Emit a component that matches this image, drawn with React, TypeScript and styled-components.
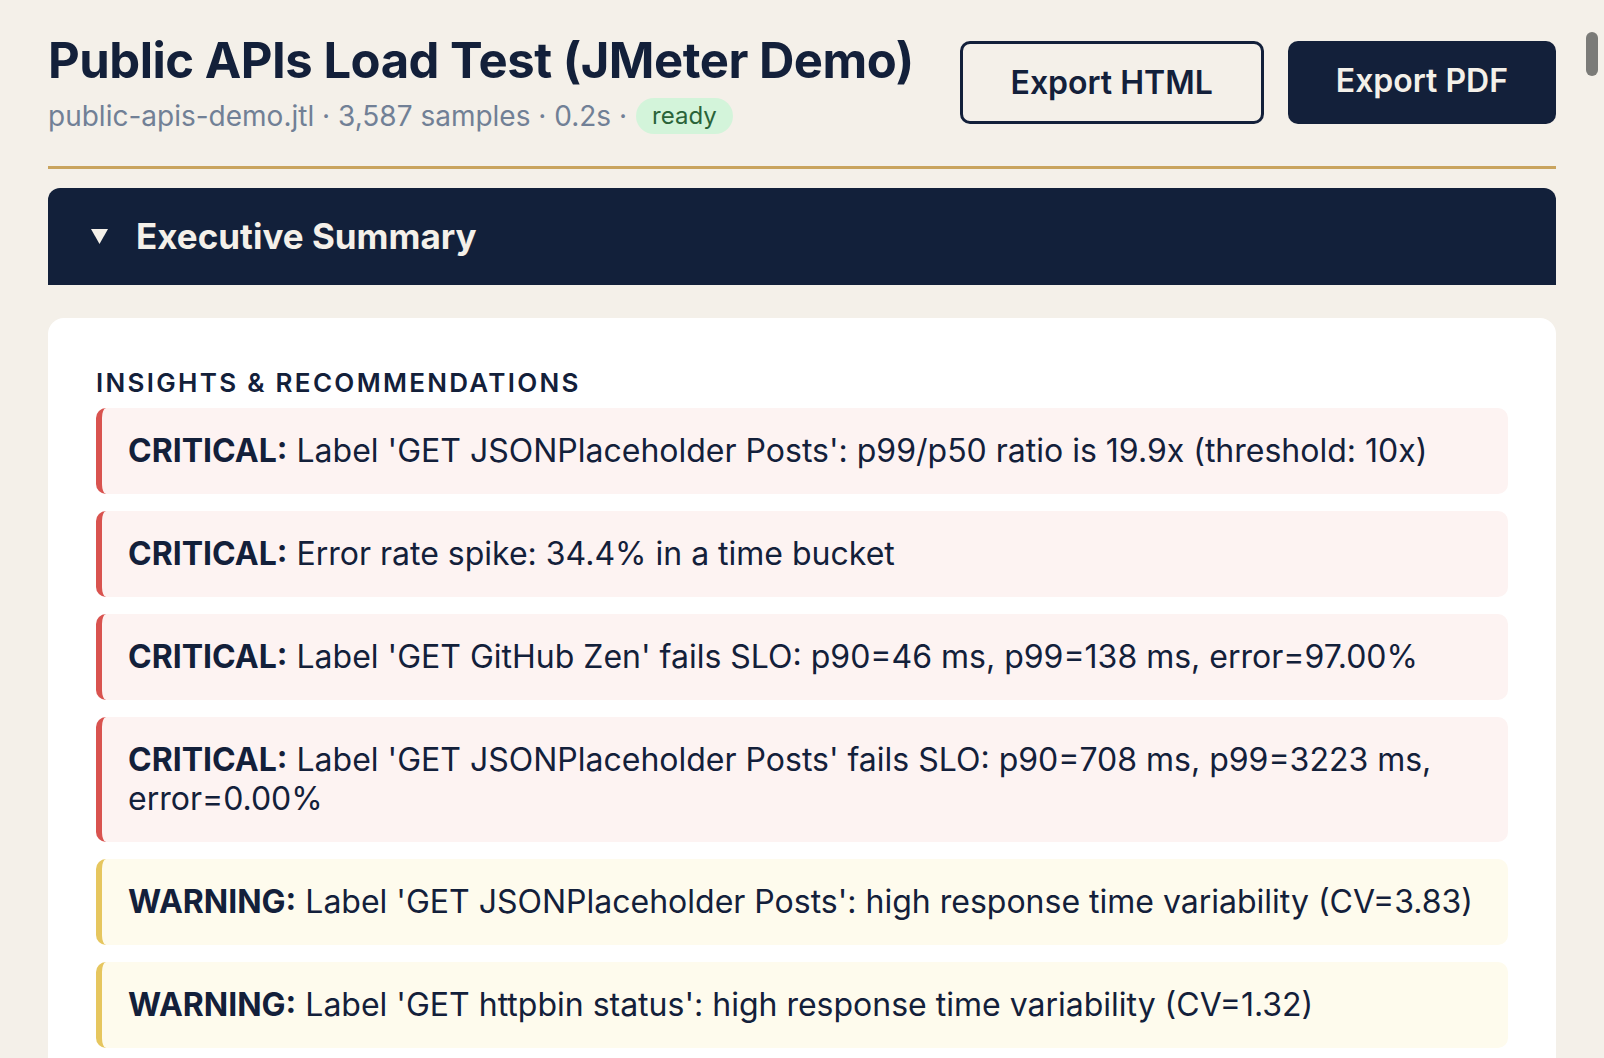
import styled, { createGlobalStyle } from "styled-components";

const GlobalStyle = createGlobalStyle`
    html, body {
        margin: 0;
        padding: 0;
        background: #f4f0e9;
        overflow: hidden;
    }
    body {
        font-family: Inter, "Noto Sans", "Liberation Sans", sans-serif;
        color: #13203a;
        -webkit-font-smoothing: antialiased;
    }
    * {
        box-sizing: border-box;
    }
`;

const Page = styled.div`
    padding: 32px 48px 0;
    min-height: 1058px;
`;

const Header = styled.header`
    display: flex;
    justify-content: space-between;
    align-items: flex-start;
    padding-bottom: 29px;
    border-bottom: 3px solid #c9a45e;
`;

const TitleBlock = styled.div`
    display: flex;
    flex-direction: column;
    gap: 4px;
`;

const Title = styled.h1`
    margin: 0;
    font-size: 49px;
    line-height: 1.2;
    font-weight: 700;
    letter-spacing: -0.01em;
    color: #13203a;
`;

const Meta = styled.div`
    display: flex;
    align-items: center;
    gap: 9px;
    font-size: 28px;
    line-height: 1.5;
    color: #718096;
`;

const Badge = styled.span`
    display: inline-flex;
    align-items: center;
    height: 36px;
    padding: 0 16px;
    border-radius: 999px;
    background: #d3f4da;
    color: #2a6339;
    font-size: 24px;
`;

const Actions = styled.div`
    display: flex;
    gap: 24px;
    margin-top: 9px;
`;

const Button = styled.button<{ $primary?: boolean }>`
    font-family: inherit;
    font-size: 32px;
    font-weight: 600;
    line-height: 38px;
    height: 83px;
    padding: ${(p) => (p.$primary ? "0 48px 4px" : "0 48px")};
    border-radius: 10px;
    border: ${(p) => (p.$primary ? "none" : "3px solid #13203a")};
    background: ${(p) => (p.$primary ? "#13203a" : "transparent")};
    color: ${(p) => (p.$primary ? "#f4f0e9" : "#13203a")};
    cursor: pointer;
`;

const Section = styled.section`
    margin-top: 19px;
`;

const SectionBar = styled.div`
    display: flex;
    align-items: center;
    gap: 28px;
    height: 97px;
    padding: 0 43px;
    background: #12203a;
    border-radius: 12px 12px 0 0;
    color: #f4f0e9;
    font-size: 35px;
    font-weight: 700;
`;

const Card = styled.div`
    margin-top: 33px;
    background: #ffffff;
    border-radius: 16px;
    padding: 47px 48px 48px;
`;

const CardHeading = styled.h3`
    margin: 0 0 7px;
    font-size: 26px;
    line-height: 1.4;
    font-weight: 600;
    letter-spacing: 2.3px;
    text-transform: uppercase;
    color: #13203a;
`;

const InsightList = styled.div`
    display: flex;
    flex-direction: column;
    gap: 17px;
`;

const levelColors = {
    critical: { bg: "#fdf3f2", bar: "#d9534f" },
    warning: { bg: "#fefbed", bar: "#e6c65e" },
};

type Level = keyof typeof levelColors;

const Insight = styled.div<{ $level: Level }>`
    background: ${(p) => levelColors[p.$level].bg};
    border-left: 6px solid ${(p) => levelColors[p.$level].bar};
    border-radius: 10px;
    padding: 23px 26px 24px;
    font-size: 32px;
    line-height: 39px;
    color: #13203a;
    strong {
        font-weight: 700;
    }
`;

const Thumb = styled.div`
    position: fixed;
    top: 32px;
    right: 6px;
    width: 12px;
    height: 44px;
    border-radius: 6px;
    background: #7b7b78;
`;

const insights: { level: Level; text: string }[] = [
    { level: "critical", text: "Label 'GET JSONPlaceholder Posts': p99/p50 ratio is 19.9x (threshold: 10x)" },
    { level: "critical", text: "Error rate spike: 34.4% in a time bucket" },
    { level: "critical", text: "Label 'GET GitHub Zen' fails SLO: p90=46 ms, p99=138 ms, error=97.00%" },
    { level: "critical", text: "Label 'GET JSONPlaceholder Posts' fails SLO: p90=708 ms, p99=3223 ms, error=0.00%" },
    { level: "warning", text: "Label 'GET JSONPlaceholder Posts': high response time variability (CV=3.83)" },
    { level: "warning", text: "Label 'GET httpbin status': high response time variability (CV=1.32)" },
];

function App() {
    return (
        <>
            <GlobalStyle />
            <Page>
                <Header>
                    <TitleBlock>
                        <Title>Public APIs Load Test (JMeter Demo)</Title>
                        <Meta>
                            <span>public-apis-demo.jtl · 3,587 samples · 0.2s ·</span>
                            <Badge>ready</Badge>
                        </Meta>
                    </TitleBlock>
                    <Actions>
                        <Button>Export HTML</Button>
                        <Button $primary>Export PDF</Button>
                    </Actions>
                </Header>
                <Section>
                    <SectionBar>
                        <svg width="17" height="15" viewBox="0 0 17 15">
                            <polygon points="0,0 17,0 8.5,15" fill="#f4f0e9" />
                        </svg>
                        <span>Executive Summary</span>
                    </SectionBar>
                    <Card>
                        <CardHeading>Insights &amp; Recommendations</CardHeading>
                        <InsightList>
                            {insights.map((item, i) => (
                                <Insight key={i} $level={item.level}>
                                    <strong>{item.level === "critical" ? "CRITICAL:" : "WARNING:"}</strong> {item.text}
                                </Insight>
                            ))}
                        </InsightList>
                    </Card>
                </Section>
            </Page>
            <Thumb />
        </>
    );
}

export default App;
